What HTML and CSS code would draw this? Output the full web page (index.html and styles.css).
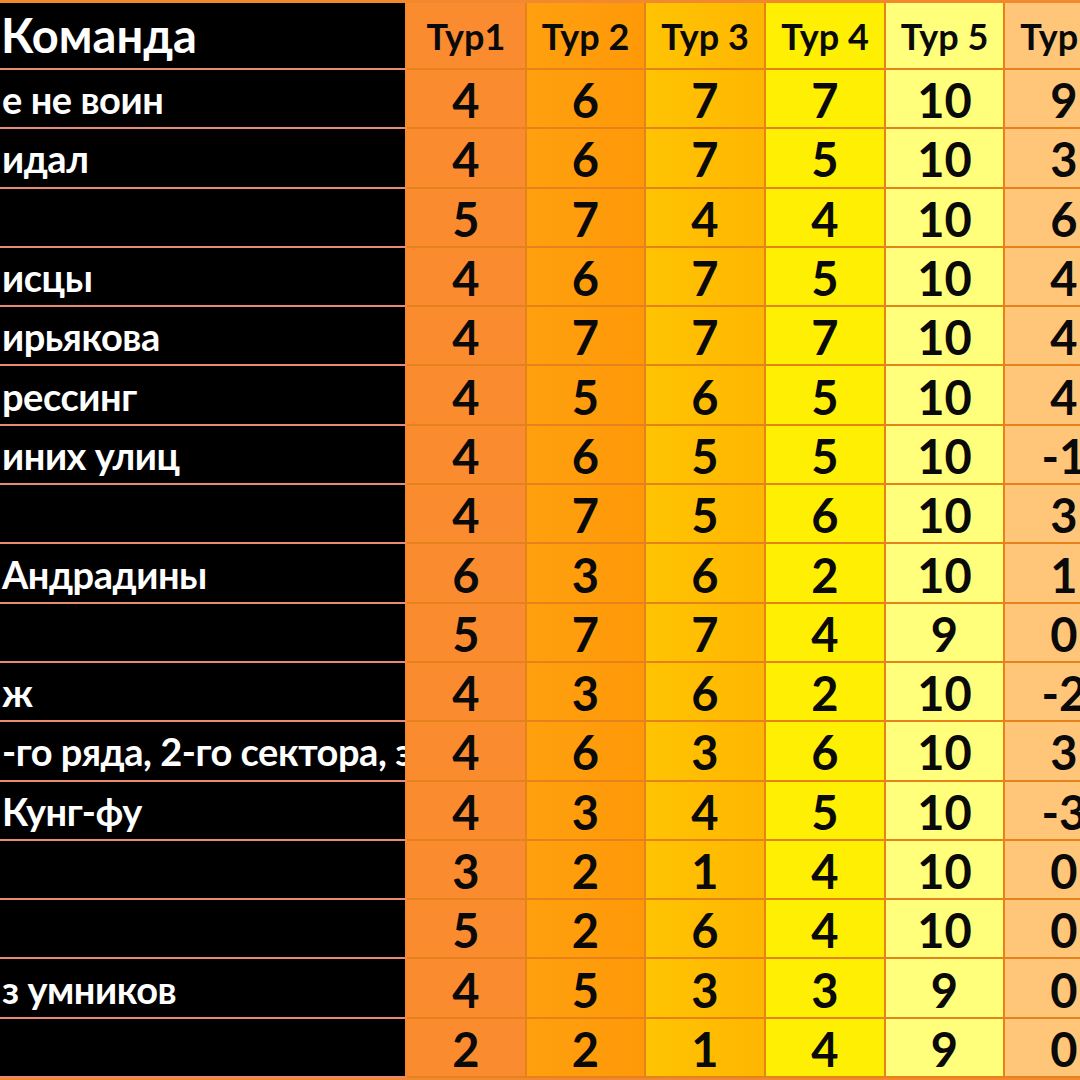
FILE: index.html
```html
<!DOCTYPE html>
<html lang="ru">
<head>
<meta charset="utf-8">
<title>Таблица</title>
<link rel="stylesheet" href="styles.css">
</head>
<body>
<div class="sheet">
  <div class="grid">
    <div class="name head">Команда</div>
    <div class="c c1 h">Тур1</div><div class="c c2 h">Тур 2</div><div class="c c3 h">Тур 3</div><div class="c c4 h">Тур 4</div><div class="c c5 h">Тур 5</div><div class="c c6 h">Тур 6</div>

    <div class="name">е не воин</div>
    <div class="c c1">4</div><div class="c c2">6</div><div class="c c3">7</div><div class="c c4">7</div><div class="c c5">10</div><div class="c c6">9</div>

    <div class="name">идал</div>
    <div class="c c1">4</div><div class="c c2">6</div><div class="c c3">7</div><div class="c c4">5</div><div class="c c5">10</div><div class="c c6">3</div>

    <div class="name"></div>
    <div class="c c1">5</div><div class="c c2">7</div><div class="c c3">4</div><div class="c c4">4</div><div class="c c5">10</div><div class="c c6">6</div>

    <div class="name">исцы</div>
    <div class="c c1">4</div><div class="c c2">6</div><div class="c c3">7</div><div class="c c4">5</div><div class="c c5">10</div><div class="c c6">4</div>

    <div class="name">ирьякова</div>
    <div class="c c1">4</div><div class="c c2">7</div><div class="c c3">7</div><div class="c c4">7</div><div class="c c5">10</div><div class="c c6">4</div>

    <div class="name">рессинг</div>
    <div class="c c1">4</div><div class="c c2">5</div><div class="c c3">6</div><div class="c c4">5</div><div class="c c5">10</div><div class="c c6">4</div>

    <div class="name">иних улиц</div>
    <div class="c c1">4</div><div class="c c2">6</div><div class="c c3">5</div><div class="c c4">5</div><div class="c c5">10</div><div class="c c6">-1</div>

    <div class="name"></div>
    <div class="c c1">4</div><div class="c c2">7</div><div class="c c3">5</div><div class="c c4">6</div><div class="c c5">10</div><div class="c c6">3</div>

    <div class="name">Андрадины</div>
    <div class="c c1">6</div><div class="c c2">3</div><div class="c c3">6</div><div class="c c4">2</div><div class="c c5">10</div><div class="c c6">1</div>

    <div class="name"></div>
    <div class="c c1">5</div><div class="c c2">7</div><div class="c c3">7</div><div class="c c4">4</div><div class="c c5">9</div><div class="c c6">0</div>

    <div class="name">ж</div>
    <div class="c c1">4</div><div class="c c2">3</div><div class="c c3">6</div><div class="c c4">2</div><div class="c c5">10</div><div class="c c6">-2</div>

    <div class="name">-го ряда, 2-го сектора, з</div>
    <div class="c c1">4</div><div class="c c2">6</div><div class="c c3">3</div><div class="c c4">6</div><div class="c c5">10</div><div class="c c6">3</div>

    <div class="name">Кунг-фу</div>
    <div class="c c1">4</div><div class="c c2">3</div><div class="c c3">4</div><div class="c c4">5</div><div class="c c5">10</div><div class="c c6">-3</div>

    <div class="name"></div>
    <div class="c c1">3</div><div class="c c2">2</div><div class="c c3">1</div><div class="c c4">4</div><div class="c c5">10</div><div class="c c6">0</div>

    <div class="name"></div>
    <div class="c c1">5</div><div class="c c2">2</div><div class="c c3">6</div><div class="c c4">4</div><div class="c c5">10</div><div class="c c6">0</div>

    <div class="name">з умников</div>
    <div class="c c1">4</div><div class="c c2">5</div><div class="c c3">3</div><div class="c c4">3</div><div class="c c5">9</div><div class="c c6">0</div>

    <div class="name"></div>
    <div class="c c1">2</div><div class="c c2">2</div><div class="c c3">1</div><div class="c c4">4</div><div class="c c5">9</div><div class="c c6">0</div>
  </div>
</div>
</body>
</html>
```

FILE: styles.css
```css
html, body {
  margin: 0;
  padding: 0;
  width: 1080px;
  height: 1080px;
  overflow: hidden;
  background: #f3892f;
}

.sheet {
  width: 1080px;
  height: 1080px;
  padding-top: 3px;
  box-sizing: border-box;
  overflow: hidden;
  background: #f3892f;
}

.grid {
  display: grid;
  grid-template-columns: 407px 120px 119px 120px 120px 119px 120px;
  grid-template-rows: 67px repeat(17, 59.3px);
  width: 1125px;
  font-family: Lato, "Open Sans", "Liberation Sans", sans-serif;
  font-weight: 700;
}

.name {
  background: #000;
  color: #fff;
  font-size: 38px;
  line-height: 1;
  letter-spacing: -0.45px;
  display: flex;
  align-items: center;
  padding-left: 2px;
  padding-top: 1px;
  white-space: nowrap;
  overflow: hidden;
  box-sizing: border-box;
  border-bottom: 2px solid #e98a72;
  border-right: 2px solid #f3892f;
}

.name.head {
  font-size: 47px;
  letter-spacing: 0;
  padding-left: 1px;
  padding-top: 0;
}

.c {
  color: #0a0a0a;
  font-size: 47px;
  line-height: 1;
  display: flex;
  align-items: center;
  justify-content: center;
  padding-top: 4px;
  box-sizing: border-box;
  border-bottom: 2px solid #e5821c;
  border-right: 2px solid #e5821c;
}

.c.h {
  font-size: 36px;
  padding-top: 0;
}

.c1 { background: #fb8b2f; }
.c2 { background: linear-gradient(90deg, #ffa00f 0%, #ff9908 100%); }
.c3 { background: linear-gradient(90deg, #ffc403 0%, #ffb600 100%); }
.c4 { background: #ffef02; }
.c5 { background: #ffff7c; }
.c6 { background: #ffc679; }
```
